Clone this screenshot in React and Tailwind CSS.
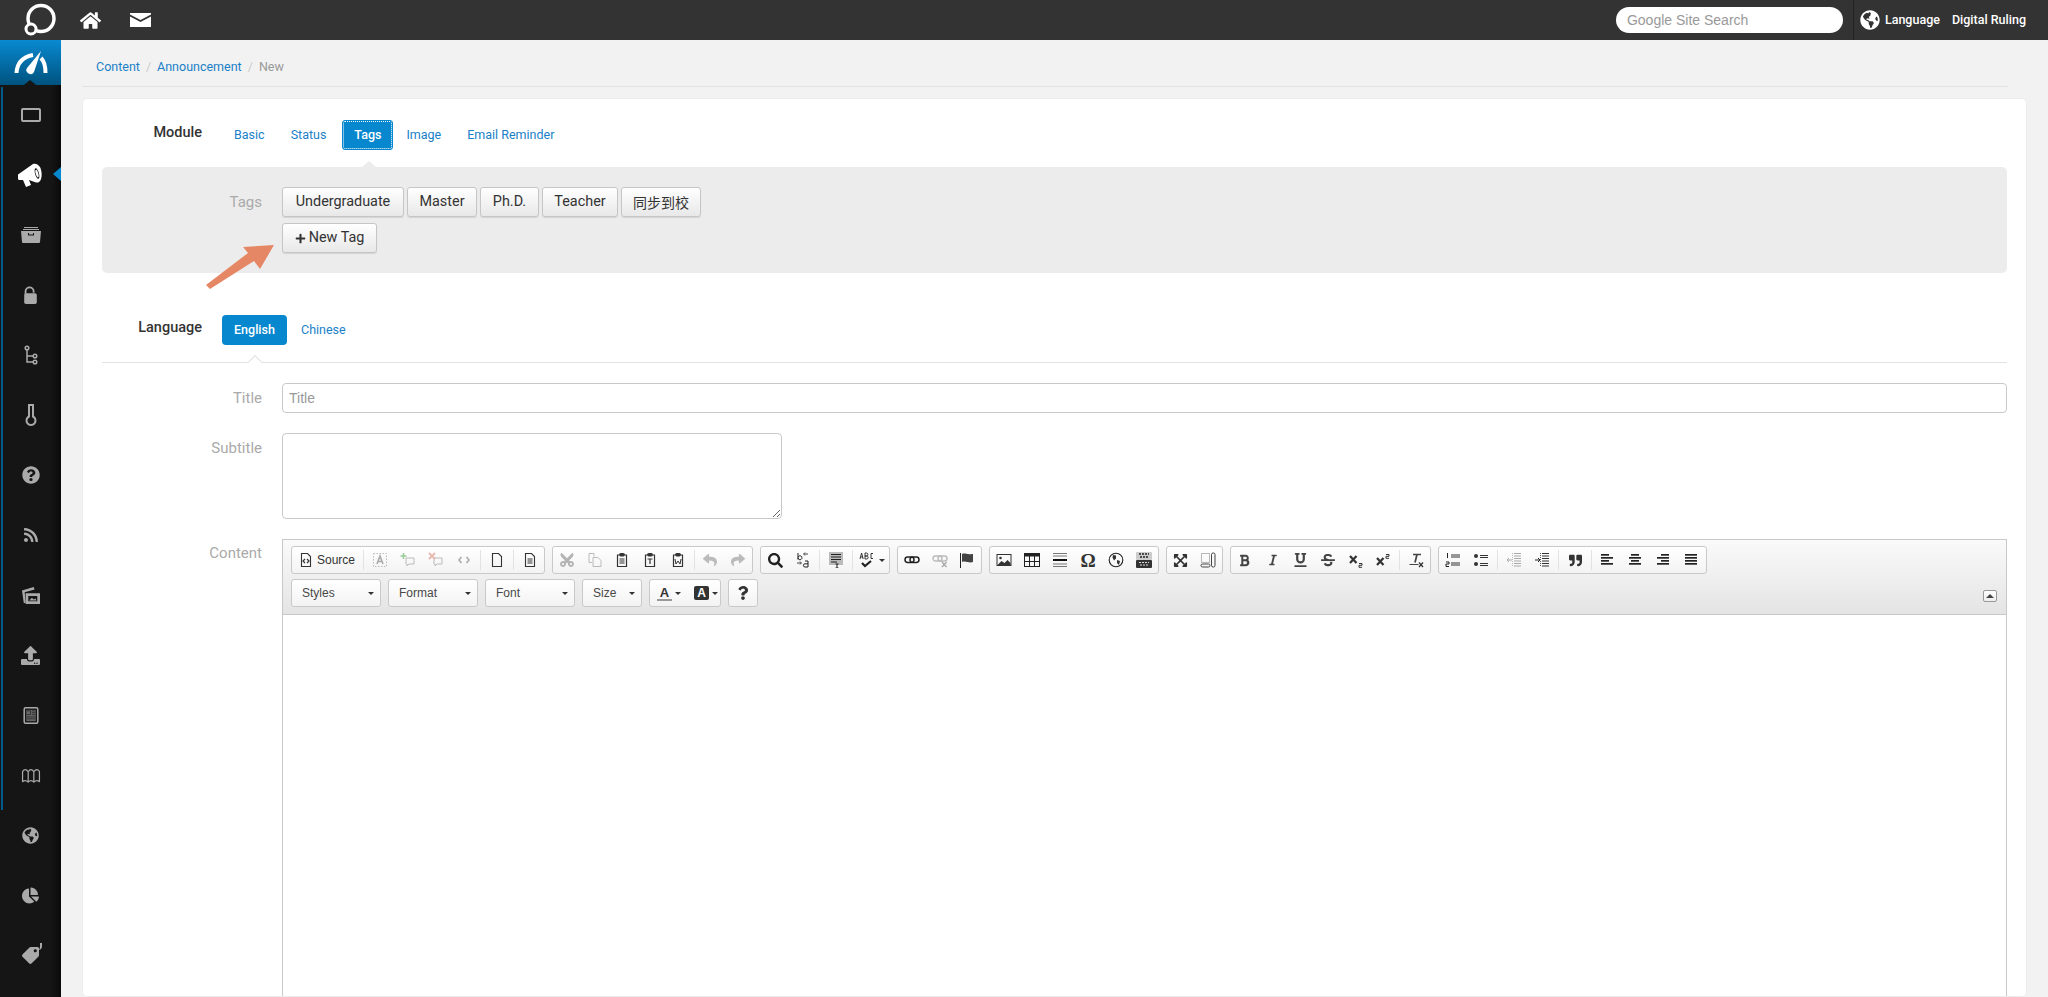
import { FaHome, FaGlobeAmericas, FaQuestionCircle, FaRss, FaUpload, FaChartPie, FaTag, FaPlus, FaReply, FaShare, FaSearch, FaBold, FaItalic, FaUnderline, FaStrikethrough, FaQuoteRight, FaExpandArrowsAlt, FaCut, FaQuestion } from 'react-icons/fa';

const S = ({ children, vb = '0 0 16 16', className = 'w-4 h-4' }) => (
  <svg viewBox={vb} className={className} fill="none" stroke="currentColor" strokeWidth="1">{children}</svg>
);

const Page = ({ children }) => (
  <S><path d="M3.5 1.5h6l3 3v10h-9z" strokeWidth="1.1" />{children}</S>
);

const Clip = ({ children }) => (
  <S>
    <path d="M5 3H3.5v11.5h9V3H11" strokeWidth="1.2" />
    <rect x="5.5" y="1.5" width="5" height="2.5" rx="1" fill="currentColor" />
    {children}
  </S>
);

const Bars = ({ rows }) => (
  <svg viewBox="0 0 16 16" className="w-4 h-4 text-[#222]" fill="currentColor">
    {rows.map(([x, w], i) => <rect key={i} x={x} y={2 + i * 3} width={w} height="1.7" />)}
  </svg>
);

const icons = {
  selectA: (
    <S>
      <rect x="1.5" y="1.5" width="13" height="13" strokeDasharray="1.5 1.5" className="text-[#bbb]" />
      <path d="M5 12l3-8 3 8M6 9.5h4" strokeWidth="1.6" className="text-[#aaa]" />
    </S>
  ),
  tplAdd: (
    <S>
      <path d="M6 6h8v6H9l-2 2v-2H6z" className="text-[#bbb]" />
      <path d="M3.5 1v6M.5 4h6" strokeWidth="1.5" className="text-[#9c9]" />
    </S>
  ),
  tplDel: (
    <S>
      <path d="M6 6h8v6H9l-2 2v-2H6z" className="text-[#bbb]" />
      <path d="M1 1l6 6M7 1L1 7" strokeWidth="1.8" className="text-[#e9b7ad]" />
    </S>
  ),
  code: <S><path d="M5.5 5L3 8l2.500 3M10.500 5L13 8l-2.500 3" strokeWidth="1.500" className="text-[#aaa]" /></S>,
  page: <Page />,
  doc: <Page><path d="M5.5 7h5M5.5 9h5M5.5 11h5" /></Page>,
  cut: <span className="text-[#b5b5b5]"><FaCut className="w-4 h-4 -rotate-90" /></span>,
  copy: (
    <S>
      <path d="M2 1.5h5v3M2 1.5v9h3" className="text-[#bbb]" />
      <path d="M6 5.5h5l3 3v6H6z" className="text-[#bbb]" />
    </S>
  ),
  pasteText: <Clip><path d="M5.5 7h5M5.5 9h5M5.5 11h5" /></Clip>,
  pasteT: <Clip><path d="M5.5 7h5M8 7v5" strokeWidth="1.2" /></Clip>,
  pasteW: <Clip><path d="M5 7l1 5 2-3 2 3 1-5" /></Clip>,
  undo: <FaReply className="w-[14px] h-[14px] text-[#bbb]" />,
  redo: <FaShare className="w-[14px] h-[14px] text-[#bbb]" />,
  search: <FaSearch className="w-[15px] h-[15px] text-[#222]" />,
  replace: (
    <S>
      <path d="M3 1v6.5M3 5.5a2 2 0 1 1 0 .5" className="text-[#222]" />
      <path d="M13 2H9M10 .5L8.5 2 10 3.5M2 11h4M5 9.5L6.5 11 5 12.5" className="text-[#444]" />
      <path d="M10 9h3v6h-3a1.5 1.5 0 0 1 0-3.2h3" className="text-[#222]" />
    </S>
  ),
  selectAll: (
    <svg viewBox="0 0 16 16" className="w-4 h-4">
      <rect x="1" y="0" width="14" height="13" fill="#bbb" />
      <path d="M3 2.5h10M3 5h10M3 7.5h10M3 10h6" stroke="#222" />
      <path d="M9 12v4M7.5 12h3M7.5 16h3" stroke="#222" />
    </svg>
  ),
  spell: (
    <svg viewBox="0 0 18 16" className="w-[18px] h-4 text-[#222]" fill="none" stroke="currentColor">
      <path d="M1 7l1.6-6L4.2 7M1.5 5h2.4M6 1v6h1.6a1.5 1.5 0 0 0 0-3H6h1.4a1.5 1.5 0 0 0 0-3zM14 1.5h-2v5h2" strokeWidth=".9" />
      <path d="M3 11l3 3 6-5" strokeWidth="2.2" />
    </svg>
  ),
  link: (
    <S>
      <rect x="1" y="5" width="9" height="5.500" rx="2.700" strokeWidth="1.500" className="text-[#222]" />
      <rect x="6" y="5" width="9" height="5.500" rx="2.700" strokeWidth="1.500" className="text-[#222]" />
    </S>
  ),
  unlink: (
    <S>
      <rect x="1" y="4" width="9" height="5" rx="2.500" strokeWidth="1.400" className="text-[#bbb]" />
      <rect x="6" y="4" width="9" height="5" rx="2.500" strokeWidth="1.400" className="text-[#bbb]" />
      <path d="M10 10l4.500 5M14.500 10L10 15" strokeWidth="1.400" className="text-[#aaa]" />
    </S>
  ),
  flag: (
    <svg viewBox="0 0 16 16" className="w-4 h-4 text-[#222]" fill="currentColor">
      <rect x="1" y="1" width="1" height="15" />
      <path d="M3 2c3-1.500 5 1 10 0l1 0v8c-4 1.500-7-1.500-11 0z" fill="#444" />
    </svg>
  ),
  image: (
    <svg viewBox="0 0 16 16" className="w-4 h-4">
      <rect x="1" y="2.500" width="14" height="11" fill="none" stroke="#333" />
      <circle cx="4.500" cy="6" r="1.300" fill="#333" />
      <path d="M1.500 13l4-4 3 2 3-3 3 3v2z" fill="#333" />
    </svg>
  ),
  table: (
    <svg viewBox="0 0 16 16" className="w-4 h-4">
      <rect x="0.500" y="1.500" width="15" height="13" fill="none" stroke="#222" />
      <rect x="0.500" y="1.500" width="15" height="3" fill="#222" />
      <path d="M5.500 4v10M10.500 4v10M1 9.500h14" stroke="#222" />
    </svg>
  ),
  hr: (
    <svg viewBox="0 0 16 16" className="w-4 h-4" stroke="#777">
      <path d="M1 1.500h14M1 4h14M1 12h14M1 14.500h14" />
      <path d="M1 8h14" stroke="#111" strokeWidth="2" />
    </svg>
  ),
  omega: <span className="font-['Liberation_Serif',serif] text-[19px] leading-none font-bold text-[#333]">Ω</span>,
  globe: (
    <svg viewBox="0 0 16 16" className="w-4 h-4">
      <circle cx="8" cy="8" r="6.800" fill="none" stroke="#222" strokeWidth="1.100" />
      <path d="M5 3l3 .5 0 3-2 2-1.500-3zM9 8l3 1-1 4-2-2z" fill="#333" />
    </svg>
  ),
  youtube: (
    <svg viewBox="0 0 16 16" className="w-4 h-4">
      <rect x="0" y="0" width="16" height="8" rx="1" fill="#ccc" />
      <rect x="0" y="8" width="16" height="8" rx="1" fill="#333" />
      <path d="M3 2h10M4 5h8" stroke="#222" strokeWidth="1.300" strokeDasharray="2 1" />
      <path d="M3 10.500h10M4 13h8" stroke="#ddd" strokeWidth="1.200" strokeDasharray="2 1" />
    </svg>
  ),
  maximize: <FaExpandArrowsAlt className="w-[15px] h-[15px] text-[#333]" />,
  blocks: (
    <S>
      <rect x="1.500" y="1.500" width="8" height="9" strokeDasharray="1 1" className="text-[#777]" />
      <rect x="1" y="12" width="9" height="3" rx="1.500" className="text-[#444]" />
      <rect x="11.500" y="1" width="3.500" height="14" rx="1.500" className="text-[#444]" />
    </S>
  ),
  bold: <FaBold className="w-[13px] h-[13px] text-[#444]" />,
  italic: <FaItalic className="w-[12px] h-[12px] text-[#444]" />,
  underline: <FaUnderline className="w-[13px] h-[14px] text-[#444]" />,
  strike: <FaStrikethrough className="w-[14px] h-[14px] text-[#444]" />,
  sub: (
    <S>
      <path d="M2 4l6.500 7M8.500 4L2 11" strokeWidth="2.200" className="text-[#333]" />
      <path d="M11 11.500h3v1.800h-3v2h3" className="text-[#333]" />
    </S>
  ),
  sup: (
    <S>
      <path d="M2 6l6.500 7M8.500 6L2 13" strokeWidth="2.200" className="text-[#333]" />
      <path d="M11 2.500h3v1.800h-3v2h3" className="text-[#333]" />
    </S>
  ),
  clear: (
    <S>
      <path d="M5 2.500h8M9 2.500l-2 8" strokeWidth="1.700" className="text-[#444]" />
      <path d="M1.500 12.500h9" className="text-[#444]" />
      <path d="M11 10.500l4 4.500M15 10.500L11 15" strokeWidth="1.300" className="text-[#333]" />
    </S>
  ),
  ol: (
    <S>
      <path d="M6 3h9M6 5h9M6 11h9M6 13h9" className="text-[#333]" />
      <path d="M2.500 1v5M1 14.500h3M1 10h3v2H1v2.500" className="text-[#222]" />
    </S>
  ),
  ul: (
    <svg viewBox="0 0 16 16" className="w-4 h-4" fill="#333">
      <circle cx="3" cy="4" r="2" />
      <circle cx="3" cy="12" r="2" />
      <path d="M7 3h8v1H7zM7 5h8v1H7zM7 11h8v1H7zM7 13h8v1H7z" />
    </svg>
  ),
  outdent: (
    <S>
      <path d="M8 1.500h7M8 4h7M8 6.500h7M8 9h7M8 11.500h7M8 14h7" className="text-[#aaa]" />
      <path d="M6 8H1M3 6L1 8l2 2" className="text-[#aaa]" />
      <path d="M6.500 1v14" strokeDasharray="1 1" className="text-[#bbb]" />
    </S>
  ),
  indent: (
    <S>
      <path d="M8 1.500h7M8 4h7M8 6.500h7M8 9h7M8 11.500h7M8 14h7" className="text-[#333]" />
      <path d="M1 8h4M4 6l2 2-2 2" className="text-[#222]" />
      <path d="M6.500 1v14" strokeDasharray="1 1" className="text-[#555]" />
    </S>
  ),
  quote: <FaQuoteRight className="w-[13px] h-[13px] text-[#333]" />,
  left: <Bars rows={[[1, 8], [1, 12], [1, 8], [1, 12]]} />,
  center: <Bars rows={[[3, 8], [1, 12], [3, 8], [1, 12]]} />,
  right: <Bars rows={[[5, 8], [1, 12], [5, 8], [1, 12]]} />,
  justify: <Bars rows={[[1, 12], [1, 12], [1, 12], [1, 12]]} />,
};

const Sep = () => <span className="w-px h-[20px] mx-[2px] bg-[#e2e2e2] shrink-0" />;

function Btn({ name }) {
  return <span className="w-[28px] h-full flex items-center justify-center shrink">{icons[name]}</span>;
}

function Group({ width, children }) {
  return (
    <div className={`${width} h-[28px] shrink-0 flex items-center border border-[#c9c9c9] rounded-[3px] bg-gradient-to-b from-white to-[#f3f3f3]`}>
      {children}
    </div>
  );
}

function Combo({ label, width }) {
  return (
    <div className={`${width} h-[28px] shrink-0 flex items-center justify-between pl-[10px] pr-[6px] border border-[#c9c9c9] rounded-[3px] bg-gradient-to-b from-white to-[#f3f3f3] text-[#484848]`}>
      <span>{label}</span>
      <span className="border-x-[3px] border-x-transparent border-t-[3px] border-t-[#333]" />
    </div>
  );
}

function Toolbar() {
  return (
    <div className="relative bg-gradient-to-b from-[#fafafa] to-[#e4e4e4] border-b border-[#c8c8c8] h-[75px] pt-[6px] pl-[8px] pr-[9px] text-[12px] font-['Liberation_Sans',sans-serif] text-[#333]">
      <div className="flex gap-[7px]">
        <Group width="w-[254px]">
          <span className="w-[69px] shrink-0 h-full flex items-center pl-[6px] gap-[3px]"><S><path d="M3.500 1.500h6l3 3v10h-9z" strokeWidth="1.100" /><path d="M7 7l-2 2 2 2M9 7l2 2-2 2" strokeWidth="1.200" /></S>Source</span>
          <Sep />
          <Btn name="selectA" /><Btn name="tplAdd" /><Btn name="tplDel" /><Btn name="code" />
          <Sep />
          <Btn name="page" />
          <Sep />
          <Btn name="doc" />
        </Group>
        <Group width="w-[201px]">
          <Btn name="cut" /><Btn name="copy" /><Btn name="pasteText" /><Btn name="pasteT" /><Btn name="pasteW" />
          <Sep />
          <Btn name="undo" /><Btn name="redo" />
        </Group>
        <Group width="w-[130px]">
          <Btn name="search" /><Btn name="replace" />
          <Sep />
          <Btn name="selectAll" />
          <Sep />
          <span className="w-[34px] shrink-0 h-full flex items-center justify-center gap-[2px]">
            {icons.spell}
            <span className="border-x-[3px] border-x-transparent border-t-[3px] border-t-[#333]" />
          </span>
        </Group>
        <Group width="w-[85px]"><Btn name="link" /><Btn name="unlink" /><Btn name="flag" /></Group>
        <Group width="w-[170px]">
          <Btn name="image" /><Btn name="table" /><Btn name="hr" /><Btn name="omega" /><Btn name="globe" /><Btn name="youtube" />
        </Group>
        <Group width="w-[57px]"><Btn name="maximize" /><Btn name="blocks" /></Group>
        <Group width="w-[201px]">
          <Btn name="bold" /><Btn name="italic" /><Btn name="underline" /><Btn name="strike" /><Btn name="sub" /><Btn name="sup" />
          <Sep />
          <Btn name="clear" />
        </Group>
        <Group width="w-[269px]">
          <Btn name="ol" /><Btn name="ul" />
          <Sep />
          <Btn name="outdent" /><Btn name="indent" />
          <Sep />
          <Btn name="quote" />
          <Sep />
          <Btn name="left" /><Btn name="center" /><Btn name="right" /><Btn name="justify" />
        </Group>
      </div>
      <div className="flex gap-[7px] mt-[5px]">
        <Combo label="Styles" width="w-[90px]" />
        <Combo label="Format" width="w-[90px]" />
        <Combo label="Font" width="w-[90px]" />
        <Combo label="Size" width="w-[60px]" />
        <div className="w-[72px] h-[28px] shrink-0 flex items-center pl-[7px] gap-[3px] border border-[#c9c9c9] rounded-[3px] bg-gradient-to-b from-white to-[#f3f3f3]">
          <span className="w-[15px] text-center font-bold text-[13px] leading-[13px] border-b-2 border-[#999]">A</span>
          <span className="border-x-[3px] border-x-transparent border-t-[3px] border-t-[#333]" />
          <span className="ml-[10px] w-[15px] h-[14px] rounded-[2px] bg-[#333] text-white text-center font-bold text-[12px] leading-[14px]">A</span>
          <span className="border-x-[3px] border-x-transparent border-t-[3px] border-t-[#333]" />
        </div>
        <div className="w-[30px] h-[28px] shrink-0 flex items-center justify-center border border-[#c9c9c9] rounded-[3px] bg-gradient-to-b from-white to-[#f3f3f3]">
          <FaQuestion className="w-[12px] h-[14px] text-[#333]" />
        </div>
        <div className="ml-auto self-end mb-[5px] w-[14px] h-[12px] flex items-center justify-center border border-[#999] rounded-[2px] bg-gradient-to-b from-white to-[#eee]">
          <span className="border-x-[4px] border-x-transparent border-b-[4px] border-b-[#444]" />
        </div>
      </div>
    </div>
  );
}

const Side = ({ children }) => <div className="h-[60px] flex items-center justify-center text-[#aaa]">{children}</div>;

function Sidebar() {
  return (
    <aside className="relative w-[61px] shrink-0 bg-gradient-to-r from-[#151515] from-85% to-[#0a0a0a] overflow-hidden">
      <div className="relative h-[45px] flex items-center justify-center bg-gradient-to-b from-[#0a8ad2] to-[#00537f]">
        <svg viewBox="0 0 34 24" className="w-[34px] h-[24px] text-white" fill="none" stroke="currentColor">
          <path d="M2.500 22C3 12 9 6 19 4" strokeWidth="4" />
          <path d="M27 7c3 3 4.500 9 4.500 15" strokeWidth="4" />
          <path d="M27 0L13 17a4 4 0 0 0 7 4z" fill="currentColor" stroke="none" />
        </svg>
        <span className="absolute left-[24px] bottom-0 border-x-[6px] border-x-transparent border-b-[5px] border-b-[#151515]" />
      </div>
      <span className="absolute left-[1px] top-[47px] w-[2px] h-[723px] bg-[#005a8c]" />
      <Side><span className="w-[20px] h-[14px] rounded-[2px] border-2 border-[#aaa]" /></Side>
      <Side>
        <svg viewBox="0 0 25 24" className="w-[25px] h-[24px] text-white" fill="currentColor">
          <path d="M0 11.500L15 1c2-1 5 0 7 3 2 4 2 9 1 12s-3 4-5 3.500L11 17l2 5-5 2-3-7-4 0a2 2 0 0 1-1-2z" />
          <ellipse cx="19" cy="10.500" rx="2" ry="5.500" fill="#151515" transform="rotate(-15 19 10.500)" />
          <ellipse cx="19" cy="10.500" rx="1.300" ry="4" transform="rotate(-15 19 10.500)" />
        </svg>
      </Side>
      <Side>
        <svg viewBox="0 0 20 16" className="w-[20px] h-[16px]" fill="currentColor">
          <path d="M3 0h14v1H3zM2 2h16v1H2z" />
          <path fillRule="evenodd" d="M0 4h20l-1 11a1 1 0 0 1-1 1H2a1 1 0 0 1-1-1zM7 6v2.500h6V6h-1v1.500H8V6z" />
        </svg>
      </Side>
      <Side>
        <svg viewBox="0 0 16 20" className="w-[15px] h-[18px]" fill="currentColor">
          <path d="M2.500 9V6a4.500 4.500 0 0 1 9 0v1.500" fill="none" stroke="currentColor" strokeWidth="2" />
          <rect x="1" y="8" width="14" height="12" rx="2" />
        </svg>
      </Side>
      <Side>
        <svg viewBox="0 0 14 20" className="w-[14px] h-[20px]" fill="none" stroke="currentColor" strokeWidth="1.500">
          <circle cx="3" cy="3" r="1.800" />
          <circle cx="11" cy="11" r="1.800" />
          <circle cx="11" cy="17" r="1.800" />
          <path d="M3 5v12h6M3 11h6" />
        </svg>
      </Side>
      <Side>
        <svg viewBox="0 0 12 24" className="w-[12px] h-[24px]" fill="none" stroke="currentColor" strokeWidth="2">
          <path d="M4 2h4v11.500a4.500 4.500 0 1 1-4 0z" />
        </svg>
      </Side>
      <Side><FaQuestionCircle className="w-[18px] h-[18px]" /></Side>
      <Side><FaRss className="w-[16px] h-[16px]" /></Side>
      <Side>
        <svg viewBox="0 0 22 20" className="w-[20px] h-[18px]" fill="currentColor">
          <path d="M1 5l13-4 1 3-11 3 1 12H3z" />
          <path fillRule="evenodd" d="M5 8h16v12H5zM8 11v6h10v-6z" />
          <path d="M9 16l3-3 2 2 2-1 1 2z" />
        </svg>
      </Side>
      <Side><FaUpload className="w-[19px] h-[19px]" /></Side>
      <Side>
        <svg viewBox="0 0 16 18" className="w-[16px] h-[17px]" fill="none" stroke="currentColor">
          <rect x=".8" y=".8" width="14.400" height="16.400" rx="1.500" strokeWidth="1.600" />
          <rect x="3" y="3" width="10" height="12" fill="currentColor" opacity=".55" stroke="none" />
          <path d="M3.500 4h4v4h-4M9 4h3.500M9 6h3.500M9 8h3.500M3.500 10.500h9M3.500 12.500h9" stroke="#333" />
        </svg>
      </Side>
      <Side>
        <svg viewBox="0 0 20 16" className="w-[20px] h-[15px]" fill="none" stroke="currentColor" strokeWidth="1.300">
          <path d="M1 15V4c1-3 4-3 6 0 2-3 4-3 6 0 2-3 5-3 6 0v11c-1-2-4-2-6 0-2-2-4-2-6 0-2-2-5-2-6 0zM7 4v11M13 4v11" />
        </svg>
      </Side>
      <Side><FaGlobeAmericas className="w-[17px] h-[17px]" /></Side>
      <Side><FaChartPie className="w-[17px] h-[17px]" /></Side>
      <Side>
        <div className="relative">
          <FaTag className="w-[17px] h-[17px] rotate-90" />
          <span className="absolute right-[-3px] top-[-4px] w-[5px] h-[7px] border-r-2 border-[#aaa] rounded-br-[4px]" />
        </div>
      </Side>
      <span className="absolute left-[53px] top-[127px] border-y-[7px] border-y-transparent border-r-[8px] border-r-[#0787cd]" />
    </aside>
  );
}

const Label = ({ children, className = '' }) => (
  <span className={`w-[160px] shrink-0 text-right text-[15px] text-[#aaa] ${className}`}>{children}</span>
);

const tagBtn = 'h-[30px] flex items-center justify-center text-[14.4px] text-[#333] border border-[#c6c6c6] rounded-[3px] bg-gradient-to-b from-white to-[#e8e8e8] shadow-[0_1px_1px_rgba(0,0,0,0.1)]';

export default function App() {
  return (
    <div className="h-screen flex flex-col overflow-hidden bg-[#f2f2f2] font-['Roboto',sans-serif]">
      <header className="h-[40px] shrink-0 flex items-center bg-[#333] text-white">
        <svg viewBox="0 0 34 34" className="w-[34px] h-[34px] ml-[23px]" fill="none" stroke="white">
          <circle cx="18" cy="15.500" r="13" strokeWidth="3.500" />
          <circle cx="8" cy="26" r="5" fill="#333" strokeWidth="3" />
        </svg>
        <FaHome className="w-[21px] h-[19px] ml-[23px]" />
        <svg viewBox="0 0 21 14" className="w-[21px] h-[14px] ml-[29px]" fill="white">
          <path d="M0 0h21v1.500L10.500 7 0 1.500z" />
          <path d="M0 3.500L10.500 9 21 3.500V14H0z" />
        </svg>
        <div className="ml-auto flex items-center h-full">
          <input placeholder="Google Site Search" className="w-[227px] h-[26px] rounded-full bg-white px-[11px] text-[14px] font-['Liberation_Sans',sans-serif] placeholder:text-[#999] outline-none" />
          <div className="ml-[10px] h-full pl-[6px] border-l border-[#222] flex items-center text-[12.5px] font-medium pr-[22px]">
            <FaGlobeAmericas className="w-[20px] h-[20px]" />
            <span className="ml-[5px]">Language</span>
            <span className="ml-[12px]">Digital Ruling</span>
          </div>
        </div>
      </header>

      <div className="flex flex-1 min-h-0">
        <Sidebar />
        <main className="flex-1 min-w-0 px-[21px] flex flex-col">
          <nav className="h-[47px] shrink-0 mr-[19px] pl-[14px] flex items-center gap-[6px] border-b border-[#e2e2e2] text-[12.5px] pt-[9px]">
            <a className="text-[#1a7fc8]">Content</a>
            <span className="text-[#ccc]">/</span>
            <a className="text-[#1a7fc8]">Announcement</a>
            <span className="text-[#ccc]">/</span>
            <span className="text-[#999]">New</span>
          </nav>

          <section className="mt-[11px] flex-1 bg-white border border-[#ececec] rounded-[5px] pl-[19px] pr-[19px] pt-[21px] overflow-hidden">
            <div className="flex items-center h-[30px]">
              <span className="w-[100px] pb-[4px] text-right text-[14.500px] font-medium text-[#333]">Module</span>
              <div className="ml-[20px] flex items-center text-[12.5px] text-[#1a7fc8]">
                <a className="pl-[12px] pr-[13px]">Basic</a>
                <a className="px-[13px]">Status</a>
                <a className="ml-[3px] h-[30px] w-[51px] flex items-center justify-center rounded-[3px] font-medium bg-[#0787cd] text-white outline-1 outline-dotted outline-offset-[-2px] outline-white border border-[#0787cd]">Tags</a>
                <a className="px-[13px]">Image</a>
                <a className="px-[13px]">Email Reminder</a>
              </div>
            </div>

            <div className="relative mt-[17px] h-[106px] bg-[#ececec] rounded-[5px] pt-[20px] flex">
              <span className="absolute left-[260px] top-[-6px] border-x-[7px] border-x-transparent border-b-[6px] border-b-[#ececec]" />
              <Label className="pt-[4px]">Tags</Label>
              <div className="ml-[20px] flex flex-col gap-[6px]">
                <div className="flex gap-[3px]">
                  <button className={`${tagBtn} w-[122px]`}>Undergraduate</button>
                  <button className={`${tagBtn} w-[70px]`}>Master</button>
                  <button className={`${tagBtn} w-[59px]`}>Ph.D.</button>
                  <button className={`${tagBtn} w-[76px]`}>Teacher</button>
                  <button className={`${tagBtn} w-[80px] !text-[14px] font-['Noto_Sans_CJK_SC',sans-serif]`}>同步到校</button>
                </div>
                <div>
                  <button className={`${tagBtn} w-[95px] gap-[3px]`}><FaPlus className="w-[11px] h-[11px]" />New Tag</button>
                </div>
              </div>
              <svg viewBox="0 0 70 48" className="absolute left-[104px] top-[74px] w-[70px] h-[48px] overflow-visible" fill="#e58765" stroke="none">
                <path d="M0 44L42 12l-5-6 31-2L54 28l-6-8L4 48z" />
              </svg>
            </div>

            <div className="mt-[42px] flex items-center h-[30px]">
              <span className="w-[100px] pb-[4px] text-right text-[14.500px] font-medium text-[#333]">Language</span>
              <div className="ml-[20px] flex items-center text-[12.5px]">
                <a className="w-[65px] h-[30px] flex items-center justify-center rounded-[4px] font-medium bg-[#0787cd] text-white">English</a>
                <a className="pl-[14px] text-[#1a7fc8]">Chinese</a>
              </div>
            </div>
            <div className="relative mt-[17px] border-t border-[#e2e2e2]">
              <span className="absolute left-[148px] top-[-6px] w-[10px] h-[10px] rotate-45 bg-white border-l border-t border-[#e2e2e2]" />
            </div>

            <div className="flex items-center mt-[20px]">
              <Label>Title</Label>
              <input placeholder="Title" className="ml-[20px] flex-1 h-[30px] px-[6px] border border-[#c9c9c9] rounded-[4px] text-[14px] font-['Liberation_Sans',sans-serif] placeholder:text-[#999] outline-none" />
            </div>
            <div className="flex mt-[20px]">
              <Label className="pt-[4px]">Subtitle</Label>
              <textarea className="block ml-[20px] w-[500px] h-[86px] border border-[#c9c9c9] rounded-[4px] outline-none" />
            </div>
            <div className="flex mt-[20px]">
              <Label className="pt-[3px]">Content</Label>
              <div className="ml-[20px] flex-1 min-w-0 h-[700px] border border-[#c8c8c8] bg-white">
                <Toolbar />
              </div>
            </div>
          </section>
        </main>
      </div>
    </div>
  );
}
